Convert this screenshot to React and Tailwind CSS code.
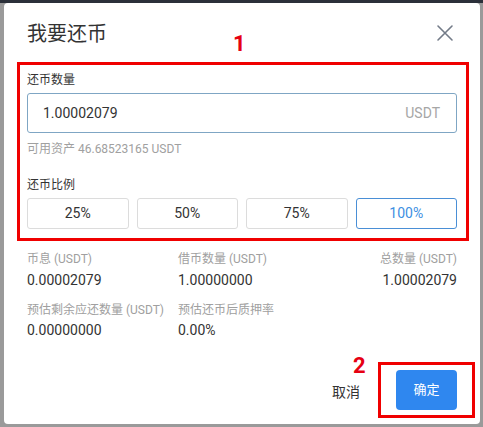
export default function App() {
  const font = { fontFamily: 'Roboto, "Noto Sans CJK SC", sans-serif' };
  return (
    <div className="w-[483px] h-[427px] bg-[#9a9a9a] border-t-[3px] border-[#2b303a] pl-[4px] pr-[3px] overflow-hidden" style={font}>
      <div className="relative w-[476px] h-[421px] bg-white rounded-[4px] px-[23px] flex flex-col">
        {/* header */}
        <div className="flex items-center justify-between h-[59px] pt-[2px]">
          <div className="text-[20px] leading-[28px] text-[#333]">我要还币</div>
          <svg width="18" height="18" viewBox="0 0 18 18" className="mr-[3px] mt-[-2px]">
            <path d="M2 2 L16 16 M16 2 L2 16" stroke="#737b88" strokeWidth="1.6" strokeLinecap="round" />
          </svg>
        </div>
        <div className="absolute left-[229px] top-[28px] text-[22px] leading-[26px] font-bold text-[#e60012]">1</div>

        {/* red box 1 */}
        <div className="ml-[-10px] mr-[-12px] border-[3px] border-[#f00000] pl-[7px] pr-[9px] pt-[7px] pb-[9px]">
          <div className="text-[12px] leading-[16px] text-[#333]">还币数量</div>
          <div className="mt-[5px] h-[40px] border border-[#7fa6c4] rounded-[3px] flex items-center justify-between pl-[15px] pr-[16px]">
            <span className="text-[14px] text-[#333]">1.00002079</span>
            <span className="text-[14px] text-[#a6a6a6]">USDT</span>
          </div>
          <div className="mt-[8px] text-[12px] leading-[16px] text-[#a0a0a0]">可用资产 46.68523165 USDT</div>
          <div className="mt-[20px] text-[12px] leading-[16px] text-[#333]">还币比例</div>
          <div className="mt-[5px] grid grid-cols-4 gap-[8px]">
            {['25%', '50%', '75%'].map((p) => (
              <div key={p} className="h-[31px] border border-[#dcdcdc] rounded-[3px] flex items-center justify-center text-[14px] text-[#333]">{p}</div>
            ))}
            <div className="h-[31px] border border-[#4a8fd6] rounded-[3px] flex items-center justify-center text-[14px] text-[#3d8fe2]">100%</div>
          </div>
        </div>

        {/* stats */}
        <div className="mt-[10px] grid grid-cols-[151px_1fr_auto]">
          <div className="text-[12px] leading-[16px] text-[#a0a0a0]">币息 (USDT)</div>
          <div className="text-[12px] leading-[16px] text-[#a0a0a0]">借币数量 (USDT)</div>
          <div className="text-[12px] leading-[16px] text-[#a0a0a0] text-right">总数量 (USDT)</div>
          <div className="text-[14px] leading-[20px] text-[#333] mt-[3px]">0.00002079</div>
          <div className="text-[14px] leading-[20px] text-[#333] mt-[3px]">1.00000000</div>
          <div className="text-[14px] leading-[20px] text-[#333] mt-[3px] text-right">1.00002079</div>
          <div className="text-[12px] leading-[16px] text-[#a0a0a0] mt-[12px]">预估剩余应还数量 (USDT)</div>
          <div className="text-[12px] leading-[16px] text-[#a0a0a0] mt-[12px]">预估还币后质押率</div>
          <div></div>
          <div className="text-[14px] leading-[20px] text-[#333] mt-[2px]">0.00000000</div>
          <div className="text-[14px] leading-[20px] text-[#333] mt-[2px]">0.00%</div>
          <div></div>
        </div>

        {/* footer */}
        <div className="mt-auto mb-[6px] flex items-center justify-end">
          <div className="text-[14px] leading-[20px] text-[#333] mr-[18px] mt-[3px]">取消</div>
          <div className="mr-[-18px] border-[3px] border-[#f00000] px-[15px] py-[5px]">
            <div className="w-[61px] h-[40px] rounded-[4px] bg-[#2f87ef] flex items-center justify-center text-[13px] text-white">确定</div>
          </div>
        </div>
        <div className="absolute left-[349px] top-[350px] text-[22px] leading-[26px] font-bold text-[#e60012]">2</div>
      </div>
    </div>
  );
}
